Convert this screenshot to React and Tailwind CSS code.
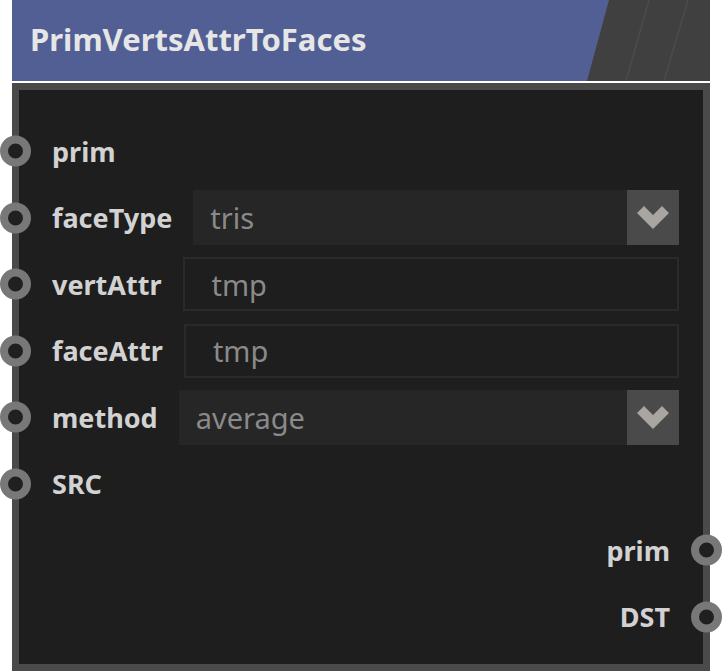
import React from "react";

const labelFont = { fontFamily: '"Noto Sans", "Open Sans", sans-serif' };

const Socket = ({ side }) => (
    <div
        className={`absolute top-1/2 -translate-y-1/2 w-[31px] h-[31px] rounded-full border-[8px] border-[#787878] bg-[#202020] ${
            side === "left" ? "left-[-19px]" : "right-[-19px]"
        }`}
    />
);

const Chevron = () => (
    <svg width="52" height="55" viewBox="0 0 52 55">
        <path d="M10 23 L17 16 L26 25 L35 16 L42 23 L26 39 Z" fill="#a9a5a1" />
    </svg>
);

const SelectBox = ({ value }) => (
    <div className="flex-1 h-[55px] bg-[#262626] flex items-stretch">
        <div className="flex-1 flex items-center pl-[17px] text-[29px] text-[#8a8a8a] leading-none">{value}</div>
        <div className="w-[52px] bg-[#4a4a4a] flex items-center justify-center">
            <Chevron />
        </div>
    </div>
);

const TextBox = ({ value }) => (
    <div className="flex-1 h-[54px] border-[2px] border-[#2a2a2a] bg-[#1e1e1e] flex items-center pl-[27px] text-[29px] text-[#8a8a8a] leading-none">
        {value}
    </div>
);

const InputRow = ({ label, children }) => (
    <div className="relative h-[66.5px] flex items-center pl-[33px] pr-[24px]">
        <Socket side="left" />
        <span className="font-bold text-[27px] text-[#d2d2d2] leading-none">{label}</span>
        {children && <div className="flex-1 flex ml-[21px]">{children}</div>}
    </div>
);

const OutputRow = ({ label }) => (
    <div className="relative h-[66.5px] flex items-center justify-end pr-[33px]">
        <span className="font-bold text-[27px] text-[#d2d2d2] leading-none">{label}</span>
        <Socket side="right" />
    </div>
);

const App = () => {
    return (
        <div className="w-[723px] h-[671px] bg-white overflow-hidden" style={labelFont}>
            <div className="ml-[12px] w-[698px]">
                {/* Header */}
                <div className="relative h-[81px] bg-[#525f94] flex items-center pl-[18px] pb-[3px]">
                    <svg className="absolute right-0 top-0" width="123" height="81" viewBox="0 0 123 81">
                        <polygon points="22,0 123,0 123,81 0,81" fill="#404040" />
                        <line x1="62" y1="0" x2="39" y2="81" stroke="#4b4b4b" strokeWidth="1.5" />
                        <line x1="101" y1="0" x2="77" y2="81" stroke="#4b4b4b" strokeWidth="1.5" />
                    </svg>
                    <h1 className="relative font-bold text-[31px] text-[#e6e6e6] leading-none">
                        PrimVertsAttrToFaces
                    </h1>
                </div>

                {/* Body */}
                <div className="mt-[2px] h-[588px] border-[7px] border-[#4a4a4a] bg-[#1e1e1e] pt-[28px]">
                    <InputRow label="prim" />
                    <InputRow label="faceType">
                        <SelectBox value="tris" />
                    </InputRow>
                    <InputRow label="vertAttr">
                        <TextBox value="tmp" />
                    </InputRow>
                    <InputRow label="faceAttr">
                        <TextBox value="tmp" />
                    </InputRow>
                    <InputRow label="method">
                        <SelectBox value="average" />
                    </InputRow>
                    <InputRow label="SRC" />
                    <OutputRow label="prim" />
                    <OutputRow label="DST" />
                </div>
            </div>
        </div>
    );
};

export default App;
